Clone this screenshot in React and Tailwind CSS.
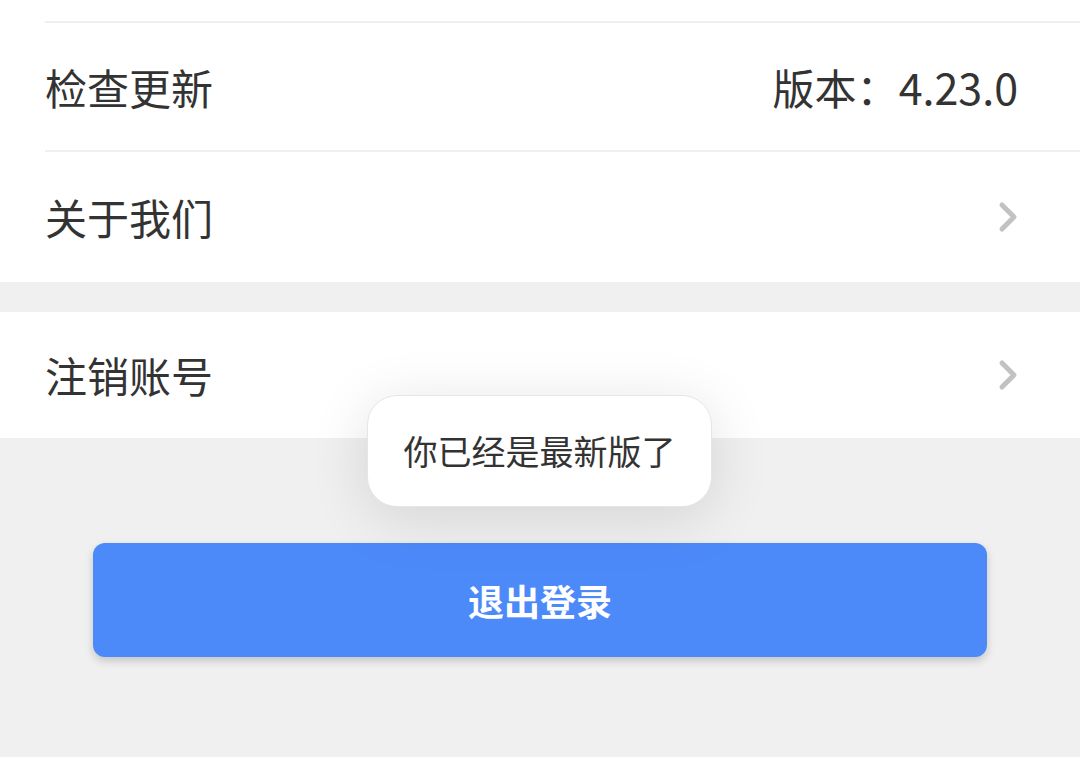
import React from "react";

function Chevron() {
  return (
    <svg width="22" height="32" viewBox="0 0 22 32" className="block">
      <polyline
        points="4,4 16,16 4,28"
        fill="none"
        stroke="#c2c2c2"
        strokeWidth="5"
        strokeLinecap="round"
        strokeLinejoin="round"
      />
    </svg>
  );
}

export default function App() {
  return (
    <div className="relative w-[1080px] h-[757px] overflow-hidden bg-[#f0f0f0] font-['Noto_Sans_CJK_SC','Noto_Sans',sans-serif] text-[#333333]">
      <div className="bg-white">
        <div className="h-[21px]" />
        <div className="ml-[45px] h-[2px] bg-[#efefef]" />
        <div className="h-[127px] flex items-center justify-between pl-[45px] pr-[62px] text-[42px] leading-none">
          <span>检查更新</span>
          <span className="flex items-center">
            <span>版本：</span>
            <span className="text-[43px]">4.23.0</span>
          </span>
        </div>
        <div className="ml-[45px] h-[2px] bg-[#efefef]" />
        <div className="h-[130px] flex items-center justify-between pl-[45px] pr-[60px] text-[42px] leading-none">
          <span>关于我们</span>
          <Chevron />
        </div>
      </div>
      <div className="mt-[30px] bg-white h-[126px] flex items-center justify-between pl-[45px] pr-[60px] text-[42px] leading-none">
        <span>注销账号</span>
        <Chevron />
      </div>
      <div className="pt-[105px] px-[93px]">
        <button className="w-full h-[114px] rounded-[12px] bg-[#4d8af9] text-white text-[36px] font-bold leading-none flex items-center justify-center shadow-[0_4px_8px_rgba(0,0,0,0.18)]">
          退出登录
        </button>
      </div>
      <div className="absolute left-[367px] top-[395px] w-[345px] h-[112px] rounded-[30px] bg-white border border-[#e6e6e6] flex items-center justify-center text-[34px] leading-none text-[#333333] shadow-[0_10px_60px_rgba(0,0,0,0.12)]">
        你已经是最新版了
      </div>
    </div>
  );
}
